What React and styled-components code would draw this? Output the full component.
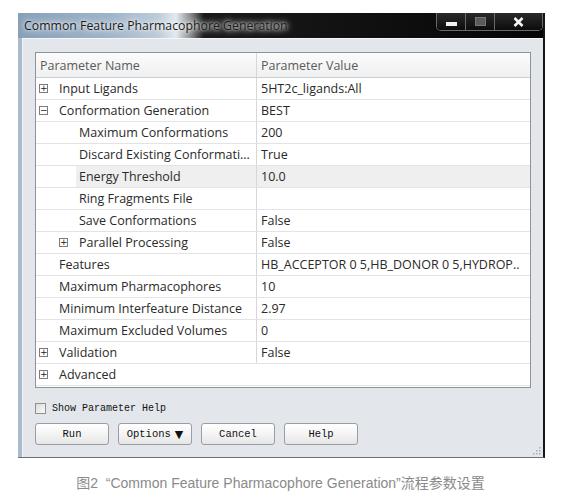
import React from 'react'
import styled, { createGlobalStyle } from 'styled-components'

const rows = [
  { level: 0, box: '+', name: 'Input Ligands', value: '5HT2c_ligands:All' },
  { level: 0, box: '-', name: 'Conformation Generation', value: 'BEST' },
  { level: 1, name: 'Maximum Conformations', value: '200' },
  { level: 1, name: 'Discard Existing Conformati...', value: 'True' },
  { level: 1, name: 'Energy Threshold', value: '10.0', selected: true },
  { level: 1, name: 'Ring Fragments File', value: '' },
  { level: 1, name: 'Save Conformations', value: 'False' },
  { level: 1, box: '+', name: 'Parallel Processing', value: 'False' },
  { level: 0, name: 'Features', value: 'HB_ACCEPTOR 0 5,HB_DONOR 0 5,HYDROP..' },
  { level: 0, name: 'Maximum Pharmacophores', value: '10' },
  { level: 0, name: 'Minimum Interfeature Distance', value: '2.97' },
  { level: 0, name: 'Maximum Excluded Volumes', value: '0' },
  { level: 0, box: '+', name: 'Validation', value: 'False' },
  { level: 0, box: '+', name: 'Advanced', category: true },
]

export default function App() {
  return (
    <>
      <GlobalStyle />
      <Page>
        <Window>
          <TitleBar>
            <Title>Common Feature Pharmacophore Generation</Title>
            <Controls>
              <CtrlButton $w={28}>
                <MinBar />
              </CtrlButton>
              <CtrlButton $w={28}>
                <MaxBox />
              </CtrlButton>
              <CtrlButton $w={47} $last>
                <svg width="11" height="10" viewBox="0 0 11 10">
                  <path d="M1.5 1 L9.5 9 M9.5 1 L1.5 9" stroke="#f4f4f4" strokeWidth="2.6" />
                </svg>
              </CtrlButton>
            </Controls>
          </TitleBar>
          <Client>
            <Grid>
              <HeaderRow>
                <HeaderCell>Parameter Name</HeaderCell>
                <HeaderCell $value>Parameter Value</HeaderCell>
              </HeaderRow>
              {rows.map((r) => (
                <Row key={r.name} $category={r.category}>
                  <NameCell $level={r.level}>
                    <BoxSlot>{r.box && <TreeBox>{r.box === '+' ? '+' : '−'}</TreeBox>}</BoxSlot>
                    <NameText $selected={r.selected}>{r.name}</NameText>
                  </NameCell>
                  {!r.category && <ValueCell $selected={r.selected}>{r.value}</ValueCell>}
                </Row>
              ))}
            </Grid>
            <CheckRow>
              <CheckBox />
              <CheckLabel>Show Parameter Help</CheckLabel>
            </CheckRow>
            <ButtonBar>
              <Button>Run</Button>
              <Button>
                Options <Arrow>▼</Arrow>
              </Button>
              <Button>Cancel</Button>
              <Button>Help</Button>
            </ButtonBar>
            <Grip>
              <svg width="10" height="10" viewBox="0 0 10 10">
                {[
                  [8, 2], [8, 5], [5, 5], [8, 8], [5, 8], [2, 8],
                ].map(([x, y]) => (
                  <rect key={x + '-' + y} x={x} y={y} width="1.5" height="1.5" fill="#a8adb4" />
                ))}
              </svg>
            </Grip>
          </Client>
        </Window>
        <Caption>图2&nbsp;&nbsp;“Common Feature Pharmacophore Generation”流程参数设置</Caption>
      </Page>
    </>
  )
}

const GlobalStyle = createGlobalStyle`
  body {
    margin: 0;
    background: #fff;
    font-family: 'Open Sans', 'Noto Sans', sans-serif;
  }
`

const Page = styled.div`
  width: 561px;
  height: 496px;
  padding-top: 13px;
  box-sizing: border-box;
  display: flex;
  flex-direction: column;
  align-items: flex-start;
`

const Window = styled.div`
  margin-left: 18px;
  width: 527px;
  height: 445px;
  display: flex;
  flex-direction: column;
  box-sizing: border-box;
  border-right: 2px solid #151515;
  border-bottom: 1px solid #6d7177;
  background: #000;
`

const TitleBar = styled.div`
  height: 25px;
  display: flex;
  align-items: flex-start;
  background: linear-gradient(
    90deg,
    #87a0b9 0px,
    #9fb4c9 90px,
    #bccbd9 140px,
    #e4eaef 158px,
    #8d8f91 172px,
    #1a1a1a 186px,
    #050505 100%
  );
`

const Title = styled.div`
  padding: 4px 0 0 6px;
  font-size: 12.3px;
  color: #1b1b1b;
  white-space: nowrap;
  text-shadow: 0 0 6px rgba(255, 255, 255, 0.9), 0 0 10px rgba(255, 255, 255, 0.6),
    0 0 3px rgba(255, 255, 255, 0.8);
`

const Controls = styled.div`
  margin-left: auto;
  display: flex;
  height: 17px;
  border: 1px solid #6a6a6a;
  border-top: none;
  border-radius: 0 0 5px 5px;
  overflow: hidden;
`

const CtrlButton = styled.div`
  width: ${(p) => p.$w}px;
  display: flex;
  align-items: center;
  justify-content: center;
  background: linear-gradient(#2a2a2a, #0c0c0c);
  border-right: ${(p) => (p.$last ? 'none' : '1px solid #6a6a6a')};
`

const MinBar = styled.div`
  width: 11px;
  height: 4px;
  margin-top: 5px;
  background: #f0f0f0;
`

const MaxBox = styled.div`
  width: 9px;
  height: 7px;
  border: 1px solid #777;
  background: #5a5a5a;
`

const Client = styled.div`
  position: relative;
  flex: 1;
  margin-left: 4px;
  background: #e3e7ec;
  border-left: 1px solid #f4f6f8;
  border-top: 1px solid #f4f6f8;
  padding: 13px 12px 0 12px;
  display: flex;
  flex-direction: column;
  background-clip: padding-box;
  box-shadow: -4px 0 0 #a9bccf;
`

const Grid = styled.div`
  border: 1px solid #8e939b;
  background: #fff;
  height: 336px;
  box-sizing: border-box;
  font-size: 12.5px;
  color: #2a2a2a;
`

const HeaderRow = styled.div`
  display: grid;
  grid-template-columns: 220px 1fr;
  height: 25px;
  background: linear-gradient(#fbfbfb, #eff0f1);
  border-bottom: 1px solid #c9ccd0;
  box-sizing: border-box;
`

const HeaderCell = styled.div`
  display: flex;
  align-items: center;
  padding-left: 4px;
  color: #5a5a5a;
  border-left: ${(p) => (p.$value ? '1px solid #d4d7db' : 'none')};
`

const Row = styled.div`
  display: grid;
  grid-template-columns: ${(p) => (p.$category ? '1fr' : '220px 1fr')};
  height: 22px;
  border-bottom: 1px solid #e3e3e3;
  box-sizing: border-box;
`

const NameCell = styled.div`
  display: flex;
  align-items: stretch;
  padding-left: ${(p) => p.$level * 20}px;
`

const BoxSlot = styled.div`
  width: 20px;
  flex-shrink: 0;
  display: flex;
  align-items: center;
  padding-left: 3px;
  box-sizing: border-box;
`

const TreeBox = styled.div`
  width: 9px;
  height: 9px;
  box-sizing: border-box;
  border: 1px solid #7c7c7c;
  background: #fff;
  font-family: 'DejaVu Sans', sans-serif;
  font-size: 9px;
  line-height: 7px;
  text-align: center;
  color: #222;
`

const NameText = styled.div`
  flex: 1;
  display: flex;
  align-items: center;
  padding-left: 3px;
  white-space: nowrap;
  background: ${(p) => (p.$selected ? '#efefef' : 'transparent')};
`

const ValueCell = styled.div`
  display: flex;
  align-items: center;
  padding-left: 4px;
  white-space: nowrap;
  overflow: hidden;
  border-left: 1px solid #d4d7db;
  background: ${(p) => (p.$selected ? '#efefef' : 'transparent')};
`

const CheckRow = styled.div`
  display: flex;
  align-items: center;
  gap: 6px;
  margin-top: 14px;
  height: 12px;
`

const CheckBox = styled.div`
  width: 11px;
  height: 11px;
  box-sizing: border-box;
  border: 1px solid #8f8f8f;
  background: linear-gradient(135deg, #dcdcdc, #fafafa);
`

const CheckLabel = styled.span`
  font-family: 'Liberation Mono', monospace;
  font-size: 10px;
  color: #111;
`

const ButtonBar = styled.div`
  display: flex;
  gap: 9px;
  margin-top: 9px;
`

const Button = styled.div`
  width: 74px;
  height: 22px;
  box-sizing: border-box;
  border: 1px solid #9a9ea4;
  border-radius: 3px;
  background: linear-gradient(#ffffff, #f4f4f4 50%, #e6e6e6);
  display: flex;
  align-items: center;
  justify-content: center;
  gap: 4px;
  font-family: 'Liberation Mono', monospace;
  font-size: 10.5px;
  color: #111;
`

const Arrow = styled.span`
  font-family: 'DejaVu Sans', sans-serif;
  font-size: 11px;
`

const Grip = styled.div`
  position: absolute;
  right: 2px;
  bottom: 2px;
  display: flex;
`

const Caption = styled.div`
  align-self: center;
  margin-top: 14px;
  font-family: 'Liberation Sans', 'Noto Sans CJK SC', sans-serif;
  font-size: 14px;
  color: #8a8a8a;
`
